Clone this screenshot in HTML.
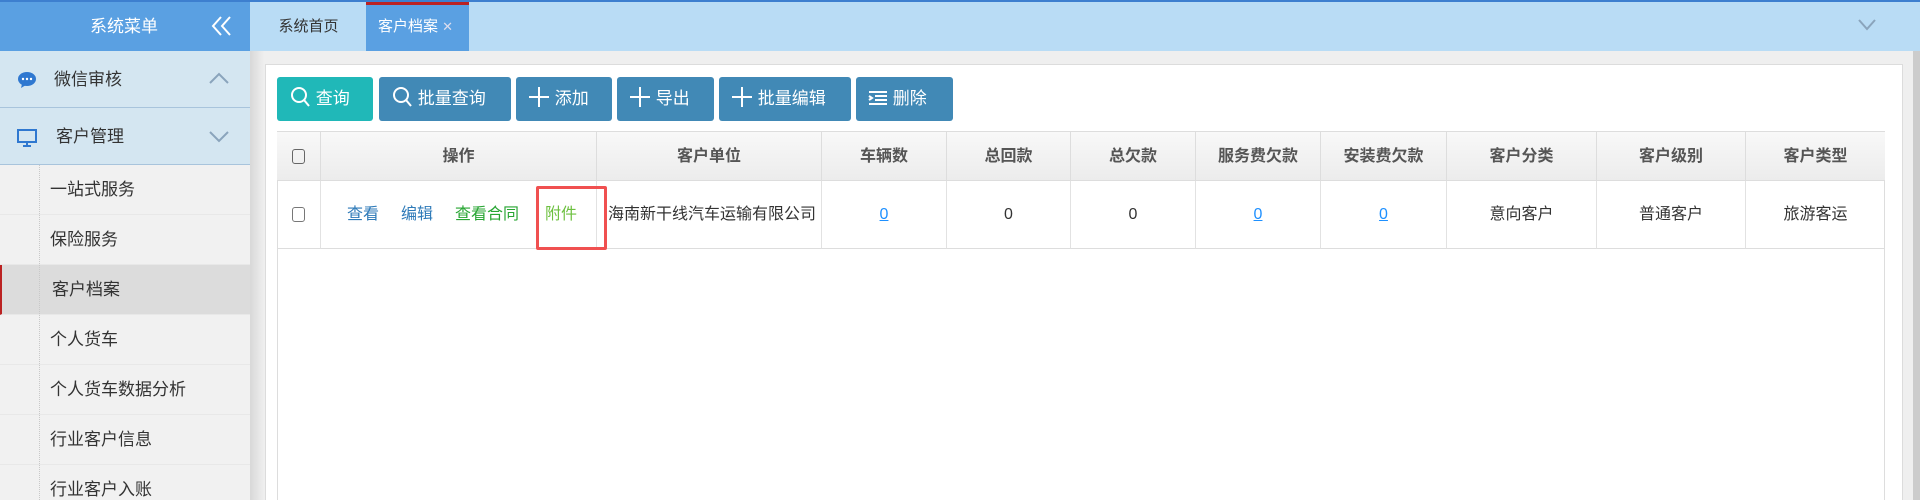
<!DOCTYPE html>
<html><head><meta charset="utf-8"><style>
*{margin:0;padding:0;box-sizing:border-box}
html,body{width:1920px;height:500px;overflow:hidden}
body{background:#efefef;font-family:"Liberation Sans","Noto Sans CJK SC",sans-serif;font-size:16px;color:#333;position:relative}
.abs{position:absolute}
.topline{left:0;top:0;width:1920px;height:2px;background:#3d7fcf}
.tabbar{left:250px;top:2px;width:1670px;height:49px;background:#b9dcf5}
.logo{left:0;top:2px;width:250px;height:49px;background:#5aa0e2;color:#fff;font-size:17px;line-height:49px}
.side{left:0;top:51px;width:250px;height:449px;background:#f1f1f1}
.shadow{left:250px;top:51px;width:14px;height:449px;background:linear-gradient(90deg,#d8d8d8,#efefef)}
.grp{left:0;width:250px;height:57px;background:#d4e6f1;border-bottom:1px solid #a8c4dc;line-height:57px;font-size:17px}
.item{left:0;width:250px;height:50px;line-height:50px;padding-left:50px;font-size:17px;color:#333;border-bottom:1px solid #e8e8e8}
.dots{left:39px;top:165px;width:0;height:335px;border-left:1px dotted #c8c8c8}
.panel{left:265px;top:64px;width:1638px;height:436px;background:#fff;border:1px solid #dcdcdc;border-bottom:none}
.btn{top:77px;height:44px;border-radius:3px;color:#fff;font-size:17px;line-height:44px;background:#4189b6;padding-left:12px;white-space:nowrap}
.table{left:277px;top:131px;width:1608px;height:369px;border:1px solid #ddd;border-bottom:none;background:#fff}
.th{top:131px;height:50px;line-height:50px;text-align:center;font-weight:bold;color:#555;background:linear-gradient(#f8f8f8,#ececec);border-right:1px solid #ddd;border-bottom:1px solid #ddd;border-top:1px solid #ddd}
.td{top:181px;height:68px;line-height:68px;text-align:center;border-right:1px solid #e2e2e2;border-bottom:1px solid #ddd;white-space:nowrap;overflow:hidden}
.lnk{color:#1e90ff;text-decoration:underline}
.cb{display:inline-block;width:13px;height:15px;border:1px solid #777;border-radius:3px;vertical-align:middle}
</style></head><body>
<div class="abs topline"></div>
<div class="abs tabbar"></div>
<div class="abs logo"><span style="position:absolute;left:90px">系统菜单</span>
<svg class="abs" style="left:210px;top:13px" width="24" height="22" viewBox="0 0 24 22"><path d="M11 2L3 11L11 20M20 2L12 11L20 20" stroke="#fff" stroke-width="2" fill="none"/></svg></div>
<div class="abs" style="left:251px;top:2px;width:115px;height:49px;line-height:49px;text-align:center;font-size:15px;color:#333">系统首页</div>
<div class="abs" style="left:366px;top:2px;width:103px;height:49px;background:#5aa0e2;border-top:3px solid #b22;color:#fff;font-size:15px;line-height:44px;padding-left:12px">客户档案 <span style="color:#dde;font-size:13px">✕</span></div>
<svg class="abs" style="left:1857px;top:18px" width="20" height="14"><path d="M2 2L10 11L18 2" stroke="#8aa4bc" stroke-width="2" fill="none"/></svg>
<div class="abs side"></div>
<div class="abs shadow"></div>
<div class="abs grp" style="top:51px"><svg class="abs" style="left:17px;top:20px" width="20" height="18"><ellipse cx="10" cy="8" rx="9" ry="7" fill="#2f78d0"/><path d="M5 13L4 17L9 14Z" fill="#2f78d0"/><circle cx="6" cy="8" r="1.2" fill="#fff"/><circle cx="10" cy="8" r="1.2" fill="#fff"/><circle cx="14" cy="8" r="1.2" fill="#fff"/></svg><span class="abs" style="left:54px">微信审核</span><svg class="abs" style="left:208px;top:20px" width="22" height="14"><path d="M2 12L11 3L20 12" stroke="#8aa4bc" stroke-width="2" fill="none"/></svg></div>
<div class="abs grp" style="top:108px"><svg class="abs" style="left:16px;top:20px" width="22" height="20"><rect x="2" y="2" width="18" height="12" fill="none" stroke="#2f78d0" stroke-width="2"/><path d="M7 18H15M11 14V18" stroke="#2f78d0" stroke-width="2"/></svg><span class="abs" style="left:56px">客户管理</span><svg class="abs" style="left:208px;top:22px" width="22" height="14"><path d="M2 2L11 11L20 2" stroke="#8aa4bc" stroke-width="2" fill="none"/></svg></div>
<div class="abs item" style="top:165px">一站式服务</div>
<div class="abs item" style="top:215px">保险服务</div>
<div class="abs item" style="top:265px;background:#dcdcdc;border-left:2px solid #b22;padding-left:50px">客户档案</div>
<div class="abs item" style="top:315px">个人货车</div>
<div class="abs item" style="top:365px">个人货车数据分析</div>
<div class="abs item" style="top:415px">行业客户信息</div>
<div class="abs item" style="top:465px;height:35px;border-bottom:none">行业客户入账</div>
<div class="abs dots"></div>
<div class="abs" style="left:1913px;top:51px;width:7px;height:449px;background:#ccc"></div>
<div class="abs panel"></div>
<div class="abs btn" style="left:277px;width:96px;background:#20b8b8"><svg width="22" height="24" style="vertical-align:-5px"><circle cx="10" cy="10" r="7" stroke="#fff" stroke-width="2" fill="none"/><path d="M15 15L20 21" stroke="#fff" stroke-width="2"/></svg> 查询</div>
<div class="abs btn" style="left:379px;width:132px"><svg width="22" height="24" style="vertical-align:-5px"><circle cx="10" cy="10" r="7" stroke="#fff" stroke-width="2" fill="none"/><path d="M15 15L20 21" stroke="#fff" stroke-width="2"/></svg> 批量查询</div>
<div class="abs btn" style="left:516px;width:96px"><svg width="22" height="22" style="vertical-align:-4px"><path d="M11 1V21M1 11H21" stroke="#fff" stroke-width="2"/></svg> 添加</div>
<div class="abs btn" style="left:617px;width:97px"><svg width="22" height="22" style="vertical-align:-4px"><path d="M11 1V21M1 11H21" stroke="#fff" stroke-width="2"/></svg> 导出</div>
<div class="abs btn" style="left:719px;width:132px"><svg width="22" height="22" style="vertical-align:-4px"><path d="M11 1V21M1 11H21" stroke="#fff" stroke-width="2"/></svg> 批量编辑</div>
<div class="abs btn" style="left:856px;width:97px"><svg width="20" height="16" style="vertical-align:-2px"><path d="M1 2H19M7 6H19M7 10H19M1 14H19M1 6L4 8L1 10" stroke="#fff" stroke-width="2" fill="none"/></svg> 删除</div>
<div class="abs table"></div>
<div class="abs th" style="left:277px;width:44px"><span class="cb" style="border-color:#666"></span></div>
<div class="abs th" style="left:321px;width:276px">操作</div>
<div class="abs th" style="left:597px;width:225px">客户单位</div>
<div class="abs th" style="left:822px;width:125px">车辆数</div>
<div class="abs th" style="left:947px;width:124px">总回款</div>
<div class="abs th" style="left:1071px;width:125px">总欠款</div>
<div class="abs th" style="left:1196px;width:125px">服务费欠款</div>
<div class="abs th" style="left:1321px;width:126px">安装费欠款</div>
<div class="abs th" style="left:1447px;width:150px">客户分类</div>
<div class="abs th" style="left:1597px;width:149px">客户级别</div>
<div class="abs th" style="left:1746px;width:139px;border-right:none">客户类型</div>
<div class="abs td" style="left:277px;width:44px"><span class="cb"></span></div>
<div class="abs td" style="left:321px;width:276px;text-align:left"><span class="abs" style="left:26px;color:#2e7ab8">查看</span><span class="abs" style="left:80px;color:#2e7ab8">编辑</span><span class="abs" style="left:134px;color:#27a532">查看合同</span><span class="abs" style="left:224px;color:#6dc040">附件</span></div>
<div class="abs td" style="left:597px;width:225px;text-align:left;padding-left:11px">海南新干线汽车运输有限公司</div>
<div class="abs td" style="left:822px;width:125px"><span class="lnk">0</span></div>
<div class="abs td" style="left:947px;width:124px">0</div>
<div class="abs td" style="left:1071px;width:125px">0</div>
<div class="abs td" style="left:1196px;width:125px"><span class="lnk">0</span></div>
<div class="abs td" style="left:1321px;width:126px"><span class="lnk">0</span></div>
<div class="abs td" style="left:1447px;width:150px">意向客户</div>
<div class="abs td" style="left:1597px;width:149px">普通客户</div>
<div class="abs td" style="left:1746px;width:139px;border-right:none">旅游客运</div>
<div class="abs" style="left:536px;top:186px;width:71px;height:64px;border:3px solid #f05050;border-radius:2px"></div>
</body></html>
